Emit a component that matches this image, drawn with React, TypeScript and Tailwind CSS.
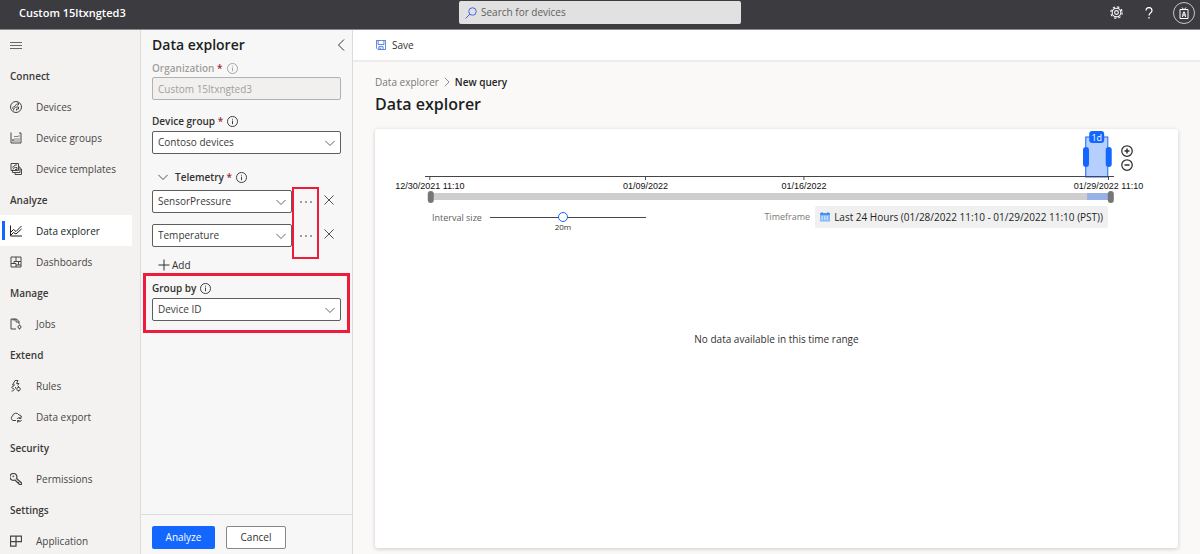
import React, { useState } from "react";

type IconProps = { children: React.ReactNode; className?: string };

function Icon({ children, className = "size-3" }: IconProps) {
  return (
    <svg viewBox="0 0 24 24" fill="none" stroke="currentColor" strokeWidth="2" className={`shrink-0 ${className}`} aria-hidden="true">
      {children}
    </svg>
  );
}

const chevronDown = <path d="M1 7l11 11L23 7" />;

const icons = {
  devices: (
    <>
      <circle cx="12" cy="12" r="11" />
      <path d="M5 15c0-3 2-3 4-4s2-5 6-5h2M15 3l3 3-3 3M7 19c0-5 3-7 7-7h3v4h-4v3" />
    </>
  ),
  groups: (
    <>
      <path d="M2 1v21h20V2h-4" />
      <path d="M6 14v5M10 13v2M10 17v2M14 13v2M14 17v2M18 13v2M18 17v2M10 8v2M14 8v2M18 7v2" strokeWidth="2.500" />
    </>
  ),
  templates: (
    <>
      <path d="M2 1h15v14H2zM5 15v4h15V8h-3M10 19v4h13V12h-3" />
      <path d="M5 9c0-3 5-1 5-5h4M6 13c0-4 4-4 8-4M14 9v4h-4" />
    </>
  ),
  explorer: (
    <>
      <path d="M1 1v21h23" />
      <path d="M2 14l5-5 5 4L23 2M2 20l5-5 5 3L23 8" />
    </>
  ),
  dashboards: <path d="M2 2h20v20H2zM12 2v9M22 11H8M2 15h10M12 15v7M12 18h10M17 11v7M8 15v-4" />,
  jobs: (
    <>
      <path d="M12 22H2V2h11l5 5v5M12 2v6h6M6 2v3M9 2v3" />
      <circle cx="19" cy="18" r="3" />
      <path d="M19 13v2M19 21v2" />
    </>
  ),
  rules: (
    <>
      <path d="M16 1h-6L5 10h5M16 1l-3 6h5l-3 4M8 12c-5 0-6 4-2 5s3 5-3 5" />
      <circle cx="17" cy="18" r="3.500" />
      <path d="M17 12v3M17 21v2M11 14v3" />
    </>
  ),
  export: (
    <>
      <path d="M12 19H6a5 5 0 0 1-1-9A7 7 0 0 1 18 8a5 5 0 0 1 5 4" />
      <path d="M14 16a5 5 0 0 1 8-1M22 11v4h-4M23 18a5 5 0 0 1-8 2M15 23v-4h4" />
    </>
  ),
  permissions: (
    <>
      <path d="M13 11l10 9v3h-4l-2-2v-2h-2l-5-5a7 7 0 1 1 3-3z" strokeWidth="2.500" />
      <circle cx="6.500" cy="6.500" r="1" />
    </>
  ),
  application: <path d="M1 2h22v11H1zM12 2v20H1V2" strokeWidth="2.500" />,
};

type NavEntry = { label: string; icon?: keyof typeof icons; active?: boolean };

const nav: NavEntry[] = [
  { label: "Connect" },
  { label: "Devices", icon: "devices" },
  { label: "Device groups", icon: "groups" },
  { label: "Device templates", icon: "templates" },
  { label: "Analyze" },
  { label: "Data explorer", icon: "explorer", active: true },
  { label: "Dashboards", icon: "dashboards" },
  { label: "Manage" },
  { label: "Jobs", icon: "jobs" },
  { label: "Extend" },
  { label: "Rules", icon: "rules" },
  { label: "Data export", icon: "export" },
  { label: "Security" },
  { label: "Permissions", icon: "permissions" },
  { label: "Settings" },
  { label: "Application", icon: "application" },
];

function Header() {
  return (
    <header className="flex h-[30px] shrink-0 items-center border-b border-[#8a898c] bg-[#3c3b40] pb-1 text-white">
      <div className="min-w-0 flex-1">
        <span className="ml-[19px] text-[11px] font-semibold leading-4">Custom 15ltxngted3</span>
      </div>
      <label className="flex h-[23px] w-[282px] items-center gap-1 rounded-xs bg-[#e1e1e1] px-1.5 text-[#3f68e6]">
        <Icon>
          <circle cx="15" cy="9" r="7.500" />
          <path d="M10 14l-9 9" />
        </Icon>
        <input
          type="text"
          aria-label="Search for devices"
          placeholder="Search for devices"
          className="min-w-0 flex-1 bg-transparent text-[10px] text-[#333] outline-none placeholder:text-[#605e5c]"
        />
      </label>
      <div className="flex min-w-0 flex-1 justify-end">
        <div className="mr-[5px] flex items-center gap-[18px]">
          <button aria-label="Settings" className="mr-0.5">
            <Icon className="size-[13px]">
              <circle cx="12" cy="12" r="8" />
              <circle cx="12" cy="12" r="3.500" />
              <circle cx="12" cy="12" r="10.500" strokeDasharray="4.200 4.050" />
            </Icon>
          </button>
          <button aria-label="Help">
            <Icon>
              <path d="M6 7c0-8 12-8 12 0 0 5-6 5-6 10M12 20v3" strokeWidth="2.500" />
            </Icon>
          </button>
          <button aria-label="Account" className="flex size-[22px] items-center justify-center rounded-full border border-[#c8c8c8]">
            <Icon>
              <path d="M4 5h16v18H4zM8 1l4 5 4-5M9 20l2-10h2l2 10M9 16h6" />
            </Icon>
          </button>
        </div>
      </div>
    </header>
  );
}

function Sidebar() {
  return (
    <nav className="w-[140px] shrink-0 overflow-hidden bg-[#f3f2f1] text-[#3b3a39]">
      <button aria-label="Toggle navigation" className="flex h-[30px] items-center pl-2.5">
        <Icon>
          <path d="M0 7h24M0 13h24M0 19h24" strokeWidth="1.500" />
        </Icon>
      </button>
      <ul>
        {nav.map((entry) =>
          entry.icon ? (
            <li key={entry.label}>
              <a
                href="#"
                className={`mr-2 flex h-[31px] items-center ${entry.active ? "bg-white text-[#201f1e]" : "text-[#484644]"}`}
              >
                <span className={`ml-0.5 mr-[5px] h-[19px] w-[3px] ${entry.active ? "bg-[#1367ff]" : ""}`} />
                <Icon>{icons[entry.icon]}</Icon>
                <span className="ml-3.5 whitespace-nowrap pt-px text-[10px]">{entry.label}</span>
              </a>
            </li>
          ) : (
            <li key={entry.label} className="flex h-[31px] items-center pl-2.5 pt-px text-[10px] font-semibold">
              {entry.label}
            </li>
          ),
        )}
      </ul>
    </nav>
  );
}

function InfoIcon() {
  return (
    <Icon className="size-[11px]">
      <circle cx="12" cy="12" r="11" />
      <path d="M12 10v8M12 6v2" />
    </Icon>
  );
}

function FieldLabel({ id, text, required }: { id: string; text: string; required?: boolean }) {
  return (
    <div className="flex h-4 items-center gap-1">
      <label htmlFor={id} className="text-[10px] font-semibold">
        {text}
        {required && <span className="text-[#a4262c]"> *</span>}
      </label>
      <InfoIcon />
    </div>
  );
}

function Select({ id, label, value, className = "" }: { id: string; label?: string; value: string; className?: string }) {
  return (
    <div className={`relative ${className}`}>
      <select
        id={id}
        aria-label={label}
        className="block h-[23px] w-full appearance-none rounded-xs border border-[#605e5c] bg-white pl-[5px] pr-5 text-[10px] text-[#3b3a39]"
      >
        <option>{value}</option>
      </select>
      <span className="pointer-events-none absolute inset-y-0 right-1.5 flex items-center text-[#484644]">
        <Icon className="size-2.5">{chevronDown}</Icon>
      </span>
    </div>
  );
}

function TelemetryRow({ id, value }: { id: string; value: string }) {
  return (
    <div className="flex items-center">
      <Select id={id} label="Telemetry" value={value} className="w-[140px]" />
      <button aria-label={`${value} options`} className="flex w-[27px] justify-center">
        <svg viewBox="0 0 12 4" className="h-1 w-3" fill="currentColor" aria-hidden="true">
          <circle cx="1" cy="2" r="0.800" />
          <circle cx="6" cy="2" r="0.800" />
          <circle cx="11" cy="2" r="0.800" />
        </svg>
      </button>
      <button aria-label={`Remove ${value}`} className="ml-[5px] pb-1">
        <Icon className="size-2.5">
          <path d="M1 1l22 22M23 1L1 23" />
        </Icon>
      </button>
    </div>
  );
}

function QueryPanel() {
  return (
    <aside className="flex w-[213px] shrink-0 flex-col border-x border-[#dcdcdc] bg-[#f7f7f7] text-[#323130]">
      <div className="flex-1 px-[11px]">
        <div className="-mr-1.5 flex h-[30px] items-center justify-between">
          <h2 className="text-[14px] font-semibold leading-5 text-[#201f1e]">Data explorer</h2>
          <button aria-label="Collapse panel">
            <Icon>
              <path d="M18 1L7 12l11 11" />
            </Icon>
          </button>
        </div>
        <div className="text-[#a19f9d]">
          <FieldLabel id="organization" text="Organization" required />
          <input
            id="organization"
            disabled
            value="Custom 15ltxngted3"
            readOnly
            className="mt-px block h-[23px] w-full rounded-xs border border-[#b3b0ad] bg-[#f1f0ef] px-[5px] text-[10px] text-[#a19f9d]"
          />
        </div>
        <div className="mt-[13px]">
          <FieldLabel id="device-group" text="Device group" required />
          <Select id="device-group" value="Contoso devices" className="mt-0.5" />
        </div>
        <section className="mt-[15px]">
          <div className="flex h-4 items-center pl-1.5">
            <button aria-label="Collapse telemetry" className="mr-[7px]">
              <Icon className="size-2.5">{chevronDown}</Icon>
            </button>
            <h3 className="mr-1 text-[10px] font-semibold">
              Telemetry <span className="text-[#a4262c]">*</span>
            </h3>
            <InfoIcon />
          </div>
          <div className="relative mt-[5px] flex flex-col gap-[11px]">
            <TelemetryRow id="telemetry-1" value="SensorPressure" />
            <TelemetryRow id="telemetry-2" value="Temperature" />
            <div className="pointer-events-none absolute -bottom-3 -top-[3px] left-[140px] w-[27px] border-2 border-[#ee1c3b]" />
          </div>
          <button className="ml-1.5 mt-2.5 flex h-4 items-center gap-0.5 text-[10px]">
            <Icon>
              <path d="M12 1v22M1 12h22" />
            </Icon>
            Add
          </button>
        </section>
        <div className="relative mt-[7px]">
          <FieldLabel id="group-by" text="Group by" />
          <Select id="group-by" value="Device ID" className="mt-0.5" />
          <div className="pointer-events-none absolute -inset-x-[9px] -bottom-3 -top-[7px] border-[3px] border-[#ee1c3b]" />
        </div>
      </div>
      <footer className="flex gap-[11px] border-t border-[#dcdcdc] px-[11px] pb-[5px] pt-[11px] text-[10px]">
        <button className="h-[23px] w-[63px] rounded-xs bg-[#1367ff] text-white">Analyze</button>
        <button className="h-[23px] w-[60px] rounded-xs border border-[#8a8886] bg-white">Cancel</button>
      </footer>
    </aside>
  );
}

const ticks = [
  { at: "0.700%", label: "12/30/2021 11:10" },
  { at: "32%", label: "01/09/2022" },
  { at: "55%", label: "01/16/2022" },
  { at: "99.200%", label: "01/29/2022 11:10" },
];

function Timeline() {
  return (
    <svg className="h-[75px] min-w-0 flex-1 overflow-visible" role="img" aria-label="Selected time range">
      <rect x="95.900%" y="8" width="3.200%" height="40" fill="#b5d0ff" stroke="#1367ff" />
      <rect x="0" y="47" width="100%" height="1" fill="#484644" />
      {ticks.map((tick) => (
        <React.Fragment key={tick.label}>
          <line x1={tick.at} x2={tick.at} y1="47" y2="51" stroke="#484644" />
          <text x={tick.at} y="60" textAnchor="middle" className="fill-[#111] font-['Liberation_Sans',sans-serif] text-[9px]">
            {tick.label}
          </text>
        </React.Fragment>
      ))}
      <g fill="#1367ff">
        <rect x="95.500%" y="18" width="6" height="20" rx="3" />
        <rect x="98.800%" y="18" width="6" height="20" rx="3" />
        <rect x="96.400%" y="2" width="15" height="12" rx="3" />
      </g>
      <text x="97.500%" y="12" textAnchor="middle" className="fill-white text-[9px]">
        1d
      </text>
      <rect x="0.900%" y="64" width="98.500%" height="7" fill="#cecece" />
      <rect x="96.100%" y="64" width="3.300%" height="7" fill="#97b2e3" />
      <rect x="0.400%" y="62" width="6" height="12" rx="3" fill="#767676" />
      <rect x="99.100%" y="62" width="6" height="12" rx="3" fill="#767676" />
    </svg>
  );
}

function ChartCard() {
  const [interval, setInterval] = useState(7);
  return (
    <section className="min-h-[419px] rounded-[3px] bg-white shadow-[0_1px_4px_rgba(0,0,0,0.18)]">
      <div className="flex gap-[7px] pl-[50px] pr-[45px]">
        <Timeline />
        <div className="flex flex-col gap-0.5 pt-4 text-[#323130]">
          <button aria-label="Zoom in">
            <Icon className="block size-3">
              <circle cx="12" cy="12" r="10.500" strokeWidth="2.500" />
              <path d="M12 7v10M7 12h10" strokeWidth="3" />
            </Icon>
          </button>
          <button aria-label="Zoom out">
            <Icon className="block size-3">
              <circle cx="12" cy="12" r="10.500" strokeWidth="2.500" />
              <path d="M7 12h10" strokeWidth="3" />
            </Icon>
          </button>
        </div>
      </div>
      <div className="flex items-start justify-between pl-[57px] pr-[70px] pt-0.5">
        <div className="flex">
          <label htmlFor="interval" className="w-[58px] whitespace-nowrap pt-1 text-[9px] leading-4 text-[#605e5c]">
            Interval size
          </label>
          <div className="flex w-[156px] flex-col pt-1.5">
            <input
              id="interval"
              type="range"
              min={0}
              max={15}
              value={interval}
              onChange={(e) => setInterval(Number(e.target.value))}
              className="h-2.5 w-full appearance-none bg-transparent [&::-webkit-slider-runnable-track]:h-px [&::-webkit-slider-runnable-track]:bg-[#484644] [&::-webkit-slider-thumb]:-mt-[5px] [&::-webkit-slider-thumb]:size-2.5 [&::-webkit-slider-thumb]:appearance-none [&::-webkit-slider-thumb]:rounded-full [&::-webkit-slider-thumb]:border [&::-webkit-slider-thumb]:border-[#1367ff] [&::-webkit-slider-thumb]:bg-white"
            />
            <output htmlFor="interval" className="pr-2.5 text-center text-[8px] leading-[10px] text-[#323130]">
              20m
            </output>
          </div>
        </div>
        <div className="flex items-center gap-[5px]">
          <span className="text-[9px] text-[#797775]">Timeframe</span>
          <button className="flex h-[22px] items-center gap-1 rounded-xs bg-[#f0f0f0] px-[5px] text-[10px] text-[#201f1e]">
            <svg viewBox="0 0 20 20" className="size-2.5" aria-hidden="true">
              <path d="M0 2h20v17H0z" fill="#83b9f9" />
              <path d="M0 2h20v4H0z" fill="#4a94ee" />
              <path d="M4 0v4M16 0v4" stroke="#2f7de1" strokeWidth="2" />
              <path d="M3 10h3M8 10h3M13 10h3M3 14h3M8 14h3M13 14h3" stroke="#fff" strokeWidth="2" />
            </svg>
            Last 24 Hours (01/28/2022 11:10 - 01/29/2022 11:10 (PST))
          </button>
        </div>
      </div>
      <p className="pt-[99px] text-center text-[10px] leading-4 text-[#323130]">No data available in this time range</p>
    </section>
  );
}

export default function App() {
  return (
    <div className="flex h-screen flex-col overflow-hidden bg-[#faf9f8] font-['Open_Sans','Noto_Sans',sans-serif] text-[10px] text-[#323130]">
      <Header />
      <div className="flex min-h-0 flex-1">
        <Sidebar />
        <QueryPanel />
        <main className="min-w-0 flex-1 overflow-hidden">
          <div className="flex h-8 items-center border-b-2 border-[#edecec] bg-white pl-[23px]">
            <button className="flex items-center gap-1.5 text-[10px]">
              <span className="text-[#3468dc]">
                <Icon className="size-2.5">
                  <path d="M1 1h22v22H5l-4-4zM5 1v10h14V1M7 23v-7h10v7M11 19v4" />
                </Icon>
              </span>
              Save
            </button>
          </div>
          <div className="px-[22px] pt-3">
            <nav aria-label="Breadcrumb" className="flex h-4 items-center gap-1">
              <a href="#" className="text-[#797775]">
                Data explorer
              </a>
              <Icon className="-mx-px size-2.5 text-[#797775]">
                <path d="M7 2l10 10L7 22" />
              </Icon>
              <span className="font-semibold text-[#201f1e]">New query</span>
            </nav>
            <h1 className="mb-[13px] mt-0.5 text-[16px] font-semibold leading-6 text-[#201f1e]">Data explorer</h1>
            <ChartCard />
          </div>
        </main>
      </div>
    </div>
  );
}
